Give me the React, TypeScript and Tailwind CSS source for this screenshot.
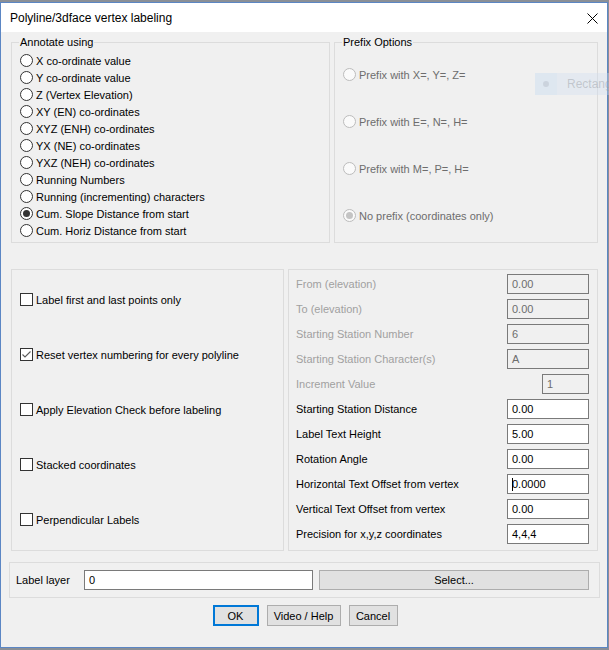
import React from "react";

function Radio({ checked, disabled }: { checked?: boolean; disabled?: boolean }) {
  return (
    <span
      className={
        disabled
          ? "flex h-[13px] w-[13px] shrink-0 items-center justify-center rounded-full border border-[#bcbcbc] bg-[#fafafa]"
          : "flex h-[13px] w-[13px] shrink-0 items-center justify-center rounded-full border border-[#333333] bg-white"
      }
    >
      {checked && (
        <span
          className={
            disabled
              ? "h-[7px] w-[7px] rounded-full bg-[#c4c4c4]"
              : "h-[7px] w-[7px] rounded-full bg-[#333333]"
          }
        />
      )}
    </span>
  );
}

function Check({ checked }: { checked?: boolean }) {
  return (
    <span className="flex h-[13px] w-[13px] shrink-0 items-center justify-center border border-[#333333] bg-white">
      {checked && (
        <svg width="11" height="11" viewBox="0 0 11 11">
          <polyline points="1.5,5.5 4,8 9.5,2.5" fill="none" stroke="#5a5a5a" strokeWidth="1.1" />
        </svg>
      )}
    </span>
  );
}

function Field({
  value,
  disabled,
  narrow,
  caret,
}: {
  value: string;
  disabled?: boolean;
  narrow?: boolean;
  caret?: boolean;
}) {
  return (
    <div
      className={
        (narrow ? "w-[47px] " : "w-[82px] ") +
        (disabled
          ? "relative flex h-[20px] items-center border border-[#7a7a7a] bg-[#f0f0f0] pl-[4px] text-[#6d6d6d]"
          : "relative flex h-[20px] items-center border border-[#7a7a7a] bg-white pl-[4px] text-black")
      }
    >
      {value}
      {caret && <span className="absolute left-[4px] top-[3px] h-[13px] w-[1px] bg-black" />}
    </div>
  );
}

const annotate = [
  "X co-ordinate value",
  "Y co-ordinate value",
  "Z (Vertex Elevation)",
  "XY (EN) co-ordinates",
  "XYZ (ENH) co-ordinates",
  "YX (NE) co-ordinates",
  "YXZ (NEH) co-ordinates",
  "Running Numbers",
  "Running (incrementing) characters",
  "Cum. Slope Distance from start",
  "Cum. Horiz Distance from start",
];

const prefixes = [
  "Prefix with X=, Y=, Z=",
  "Prefix with E=, N=, H=",
  "Prefix with M=, P=, H=",
  "No prefix (coordinates only)",
];

const checks = [
  { label: "Label first and last points only", checked: false },
  { label: "Reset vertex numbering for every polyline", checked: true },
  { label: "Apply Elevation Check before labeling", checked: false },
  { label: "Stacked coordinates", checked: false },
  { label: "Perpendicular Labels", checked: false },
];

const fields: { label: string; value: string; disabled?: boolean; narrow?: boolean; caret?: boolean }[] = [
  { label: "From (elevation)", value: "0.00", disabled: true },
  { label: "To (elevation)", value: "0.00", disabled: true },
  { label: "Starting Station Number", value: "6", disabled: true },
  { label: "Starting Station Character(s)", value: "A", disabled: true },
  { label: "Increment Value", value: "1", disabled: true, narrow: true },
  { label: "Starting Station Distance", value: "0.00" },
  { label: "Label Text Height", value: "5.00" },
  { label: "Rotation Angle", value: "0.00" },
  { label: "Horizontal Text Offset from vertex", value: "0.0000", caret: true },
  { label: "Vertical Text Offset from vertex", value: "0.00" },
  { label: "Precision for x,y,z coordinates", value: "4,4,4" },
];

export default function App() {
  return (
    <div className="relative h-[650px] w-[609px] overflow-hidden bg-[#8a8f96] font-['Liberation_Sans',Arial,sans-serif] text-[11px] leading-[14px] text-black">
      <div className="mt-[2px] flex h-[646px] w-[608px] flex-col border border-[#5b86c4] bg-[#f0f0f0]">
        {/* title bar */}
        <div className="flex h-[29px] shrink-0 items-center justify-between bg-white pl-[9px] pr-[9px]">
          <span className="text-[12px] leading-[16px]">Polyline/3dface vertex labeling</span>
          <svg width="11" height="11" viewBox="0 0 11 11" className="mt-[1px]">
            <line x1="0.5" y1="0.5" x2="10.5" y2="10.5" stroke="#000" strokeWidth="1" />
            <line x1="10.5" y1="0.5" x2="0.5" y2="10.5" stroke="#000" strokeWidth="1" />
          </svg>
        </div>

        {/* body */}
        <div className="flex flex-1 flex-col">
          <div className="flex gap-[4px] pl-[10px] pt-[2px]">
            <fieldset className="h-[209px] w-[319px] border border-[#dcdcdc]">
              <legend className="ml-[7px] px-[1px] leading-[16px]">Annotate using</legend>
              <div className="flex flex-col pl-[8px] pt-[2px]">
                {annotate.map((t, i) => (
                  <div key={t} className="flex h-[17px] items-center gap-[3px]">
                    <Radio checked={i === 9} />
                    <span>{t}</span>
                  </div>
                ))}
              </div>
            </fieldset>
            <fieldset className="h-[209px] w-[264px] border border-[#dcdcdc]">
              <legend className="ml-[7px] px-[1px] leading-[16px]">Prefix Options</legend>
              <div className="flex flex-col pl-[8px] pt-[1px]">
                {prefixes.map((t, i) => (
                  <div key={t} className="flex h-[47px] items-center gap-[3px] text-[#6d6d6d]">
                    <Radio disabled checked={i === 3} />
                    <span>{t}</span>
                  </div>
                ))}
              </div>
            </fieldset>
          </div>

          <div className="mt-[26px] flex gap-[4px] pl-[10px]">
            <div className="flex h-[282px] w-[273px] flex-col border border-[#dcdcdc] pl-[8px] pt-[2px]">
              {checks.map((c) => (
                <div key={c.label} className="flex h-[55px] items-center gap-[3px]">
                  <Check checked={c.checked} />
                  <span>{c.label}</span>
                </div>
              ))}
            </div>
            <div className="flex h-[282px] w-[310px] flex-col border border-[#dcdcdc] pl-[7px] pr-[8px] pt-[1px]">
              {fields.map((f) => (
                <div key={f.label} className="flex h-[25px] items-center justify-between">
                  <span className={f.disabled ? "text-[#a0a0a0]" : "text-black"}>{f.label}</span>
                  <Field value={f.value} disabled={f.disabled} narrow={f.narrow} caret={f.caret} />
                </div>
              ))}
            </div>
          </div>

          <div className="ml-[8px] mt-[11px] flex h-[36px] w-[591px] items-center border border-[#dcdcdc] pl-[6px]">
            <span className="w-[68px] shrink-0">Label layer</span>
            <div className="flex h-[20px] w-[229px] items-center border border-[#7a7a7a] bg-white pl-[4px]">0</div>
            <div className="ml-[6px] flex h-[20px] w-[270px] items-center justify-center border border-[#adadad] bg-[#e1e1e1]">
              Select...
            </div>
          </div>

          <div className="mt-[7px] flex justify-center gap-[8px] pl-[2px]">
            <div className="flex h-[21px] w-[46px] items-center justify-center border-2 border-[#0078d7] bg-[#e1e1e1]">OK</div>
            <div className="flex h-[21px] w-[74px] items-center justify-center border border-[#adadad] bg-[#e1e1e1]">
              Video / Help
            </div>
            <div className="flex h-[21px] w-[49px] items-center justify-center border border-[#adadad] bg-[#e1e1e1]">Cancel</div>
          </div>
        </div>
      </div>

      {/* semi-transparent overlay from another window */}
      <div className="absolute left-[535px] top-[73px] flex h-[22px] w-[74px]">
        <div className="flex h-full w-[22px] items-center justify-center bg-[rgba(190,215,240,0.35)]">
          <span className="h-[6px] w-[6px] rounded-full bg-[rgba(170,175,185,0.35)]" />
        </div>
        <div className="flex h-full flex-1 items-center overflow-hidden whitespace-nowrap bg-[rgba(205,222,240,0.35)] pl-[10px] text-[12px] text-[rgba(150,155,160,0.45)]">
          Rectang
        </div>
      </div>
    </div>
  );
}
